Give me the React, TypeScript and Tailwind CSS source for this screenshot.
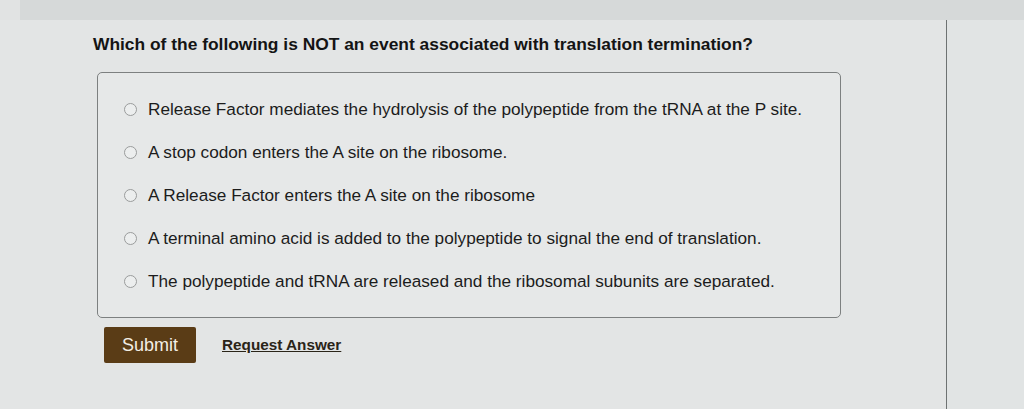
import React from "react";

const options = [
  "Release Factor mediates the hydrolysis of the polypeptide from the tRNA at the P site.",
  "A stop codon enters the A site on the ribosome.",
  "A Release Factor enters the A site on the ribosome",
  "A terminal amino acid is added to the polypeptide to signal the end of translation.",
  "The polypeptide and tRNA are released and the ribosomal subunits are separated.",
];

export default function App() {
  return (
    <div
      className="w-[1024px] h-[409px] overflow-hidden bg-[#e3e5e5] text-[#1a1a1a]"
      style={{ fontFamily: '"Liberation Sans", Arial, sans-serif' }}
    >
      {/* top strip */}
      <div className="flex h-[20px]">
        <div className="w-[20px] bg-[#e1e3e3]" />
        <div className="flex-1 bg-[#d6d9d9]" />
      </div>

      <div className="flex h-[389px]">
        {/* question column */}
        <div className="w-[946px] pl-[93px] pt-[14px]">
          <h1 className="text-[17.4px] font-bold leading-5 text-[#141414]">
            Which of the following is NOT an event associated with translation termination?
          </h1>

          <div className="mt-[18px] ml-[4px] w-[744px] h-[246px] rounded-[5px] border border-[#7d8080] bg-[#e6e8e8] pl-[26px] pt-[26px]">
            <ul className="flex flex-col gap-[23px]">
              {options.map((o) => (
                <li key={o} className="flex items-center h-5 gap-[11px]">
                  <span className="w-[13px] h-[13px] rounded-full border border-[#9a9c9c] bg-[#eceeee]" />
                  <span className="text-[17.2px] leading-5 text-[#1c1c1c]">{o}</span>
                </li>
              ))}
            </ul>
          </div>

          <div className="flex items-center mt-[9px] ml-[11px] gap-[26px]">
            <button className="w-[92px] h-[36px] rounded-[2px] bg-[#5a3c16] text-[#f3efe6] text-[18px]">
              Submit
            </button>
            <a className="text-[15.3px] font-bold underline text-[#2a2418]">Request Answer</a>
          </div>
        </div>

        {/* divider */}
        <div className="w-px bg-[#6e7272]" />
        <div className="flex-1 bg-[#e1e4e4]" />
      </div>
    </div>
  );
}
